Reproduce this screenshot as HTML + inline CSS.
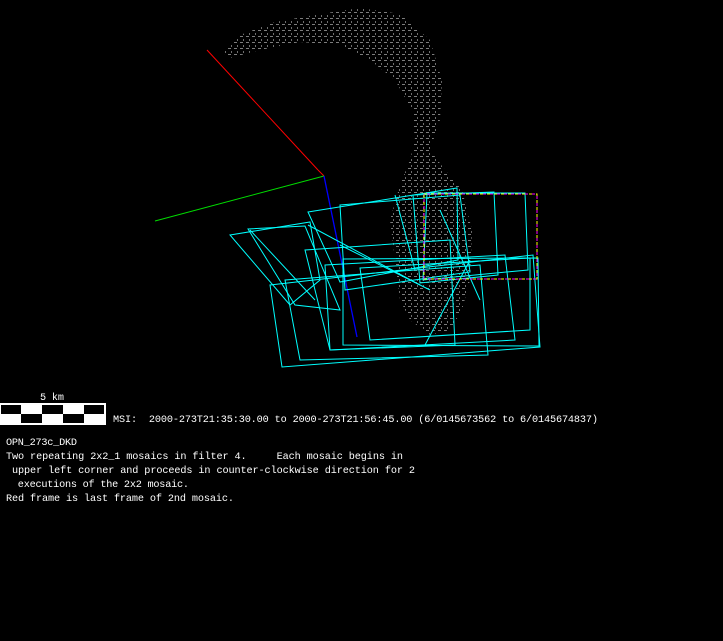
<!DOCTYPE html>
<html><head><meta charset="utf-8"><style>
html,body{margin:0;padding:0;background:#000;width:723px;height:641px;overflow:hidden}
svg{position:absolute;left:0;top:0}
.t{font-family:"Liberation Mono",monospace;font-size:10.2px;fill:#fff}
</style></head><body>
<svg width="723" height="641" viewBox="0 0 723 641">
<defs>
<pattern id="dots" width="6" height="6" patternUnits="userSpaceOnUse">
<rect x="0" y="0" width="3" height="1" fill="#8a8a8a"/><rect x="3" y="3" width="1" height="2" fill="#7a7a7a"/>
</pattern>
</defs>
<path d="M222,52 L240,35 L275,22 L320,14 L360,8 L400,14 L430,40 L442,80 L440,120 L430,150 L445,170 L462,190 L472,230 L470,280 L462,310 L450,330 L430,335 L410,320 L400,300 L395,260 L390,220 L400,185 L410,160 L415,140 L412,110 L395,80 L370,60 L340,45 L300,42 L260,50 L230,58 Z" fill="url(#dots)" opacity="0.9"/>
<line x1="207" y1="50" x2="318" y2="170" stroke="#f00" stroke-width="1"/>
<line x1="318" y1="170" x2="324" y2="176" stroke="#f00"/>
<line x1="155" y1="221" x2="324" y2="176" stroke="#0d0" stroke-width="1"/>
<line x1="324" y1="176" x2="357" y2="337" stroke="#00f" stroke-width="1.3"/>
<g fill="none" stroke="#0ff" stroke-width="1">
<polygon points="308,212 457,188 458,260 340,282"/>
<polygon points="230,235 310,222 320,280 290,305"/>
<polygon points="248,229 305,226 340,310 295,305"/>
<polygon points="270,285 533,255 540,347 282,367"/>
<polygon points="343,259 538,258 539,346 343,345"/>
<polygon points="427,193 525,193 528,270 423,280"/>
<polygon points="413,195 494,192 498,275 420,283"/>
<polygon points="340,205 460,195 470,272 345,290"/>
<polygon points="325,265 505,255 515,340 330,350"/>
<polygon points="285,280 480,265 488,355 300,360"/>
<polygon points="305,250 450,240 455,345 330,350"/>
<polygon points="360,268 530,258 530,330 370,340"/>
<line x1="308" y1="225" x2="420" y2="285"/>
<line x1="340" y1="245" x2="430" y2="290"/>
<line x1="425" y1="345" x2="470" y2="260"/>
<line x1="440" y1="210" x2="480" y2="300"/>
<line x1="395" y1="195" x2="415" y2="270"/>
<line x1="250" y1="230" x2="315" y2="300"/>
</g>
<rect x="424" y="194" width="113" height="85" fill="none" stroke="#ff0" stroke-width="1" stroke-dasharray="4,3"/>
<rect x="424" y="194" width="113" height="85" fill="none" stroke="#f0f" stroke-width="1" stroke-dasharray="3,4" stroke-dashoffset="4"/>
<rect x="0.5" y="403.5" width="105" height="21" fill="#fff" stroke="#fff"/>
<rect x="1" y="405" width="20" height="9" fill="#000"/>
<rect x="42" y="405" width="21" height="9" fill="#000"/>
<rect x="84" y="405" width="20" height="9" fill="#000"/>
<rect x="21" y="414" width="21" height="9" fill="#000"/>
<rect x="63" y="414" width="21" height="9" fill="#000"/>
<text class="t" x="40" y="400" textLength="24" lengthAdjust="spacing">5 km</text>
<text class="t" x="113" y="422" xml:space="preserve" textLength="485" lengthAdjust="spacing">MSI:  2000-273T21:35:30.00 to 2000-273T21:56:45.00 (6/0145673562 to 6/0145674837)</text>
<text class="t" x="6" y="445" textLength="71" lengthAdjust="spacing">OPN_273c_DKD</text>
<text class="t" x="6" y="459" xml:space="preserve" textLength="397" lengthAdjust="spacing">Two repeating 2x2_1 mosaics in filter 4.     Each mosaic begins in</text>
<text class="t" x="6" y="473" xml:space="preserve" textLength="409" lengthAdjust="spacing"> upper left corner and proceeds in counter-clockwise direction for 2</text>
<text class="t" x="6" y="487" xml:space="preserve" textLength="183" lengthAdjust="spacing">  executions of the 2x2 mosaic.</text>
<text class="t" x="6" y="501" textLength="228" lengthAdjust="spacing">Red frame is last frame of 2nd mosaic.</text>
</svg>
</body></html>
